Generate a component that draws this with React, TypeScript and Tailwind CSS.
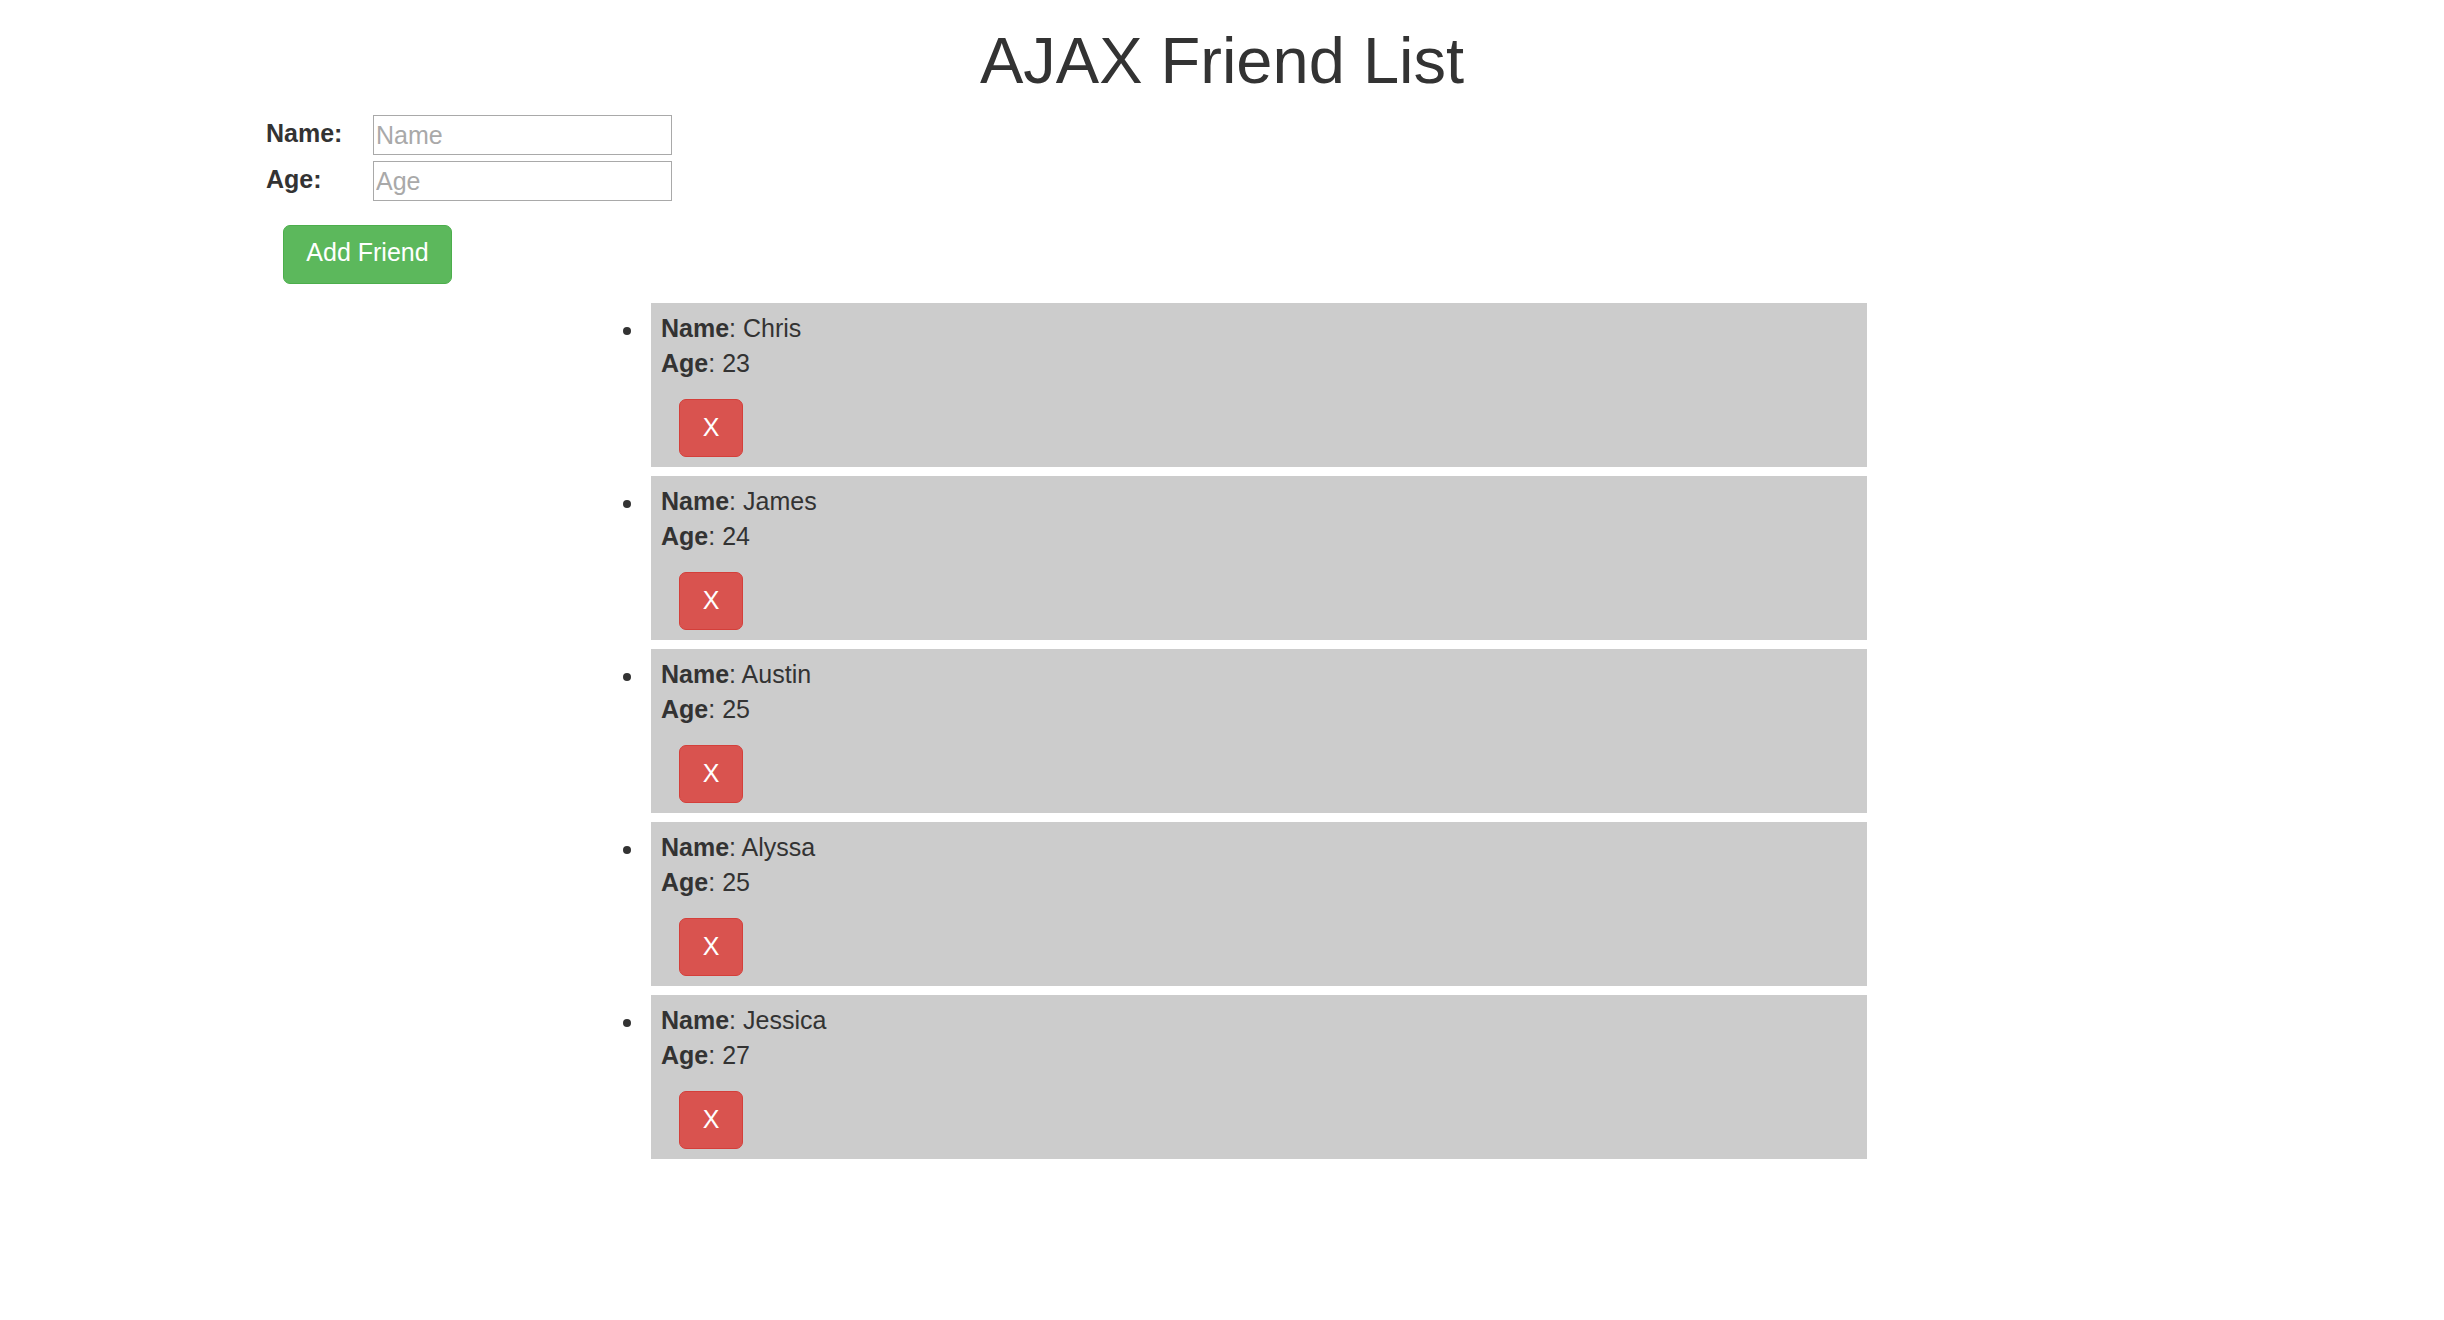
const friends = [
  { name: 'Chris', age: 23 },
  { name: 'James', age: 24 },
  { name: 'Austin', age: 25 },
  { name: 'Alyssa', age: 25 },
  { name: 'Jessica', age: 27 },
];

export default function App() {
  return (
    <div className="min-h-screen bg-white font-['Liberation_Sans',Arial,sans-serif] text-[#333]">
      <h1 className="mt-[25px] text-center text-[65px] leading-[72px] font-normal">AJAX Friend List</h1>

      <form className="mt-[18px] ml-[266px]" onSubmit={(e) => e.preventDefault()}>
        <div className="flex items-start">
          <label className="w-[107px] text-[25px] leading-[36px] font-bold">Name:</label>
          <input
            placeholder="Name"
            className="h-[40px] w-[299px] border border-[#a9a9a9] px-[2px] text-[25px] placeholder:text-[#a9a9a9]"
          />
        </div>
        <div className="mt-[6px] flex items-start">
          <label className="w-[107px] text-[25px] leading-[36px] font-bold">Age:</label>
          <input
            placeholder="Age"
            className="h-[40px] w-[299px] border border-[#a9a9a9] px-[2px] text-[25px] placeholder:text-[#a9a9a9]"
          />
        </div>
        <button
          type="submit"
          className="mt-[24px] ml-[17px] h-[59px] w-[169px] rounded-[7px] border border-[#4cae4c] bg-[#5cb85c] pb-[3px] text-[25px] text-white"
        >
          Add Friend
        </button>
      </form>

      <ul className="mt-[19px] ml-[611px] w-[1256px]">
        {friends.map((f) => (
          <li key={f.name} className="mb-[9px] flex items-start">
            <div className="w-[40px] shrink-0 pt-[24px] pl-[12px]">
              <div className="h-[8px] w-[8px] rounded-full bg-[#333]" />
            </div>
            <div className="flex-1 bg-[#ccc] pt-[8px] pb-[10px] pl-[10px] text-[25px] leading-[35px]">
              <div>
                <b>Name</b>: {f.name}
              </div>
              <div>
                <b>Age</b>: {f.age}
              </div>
              <button className="mt-[18px] ml-[18px] h-[58px] w-[64px] rounded-[7px] border border-[#d43f3a] bg-[#d9534f] pb-[2px] text-[25px] leading-[35px] text-white">
                X
              </button>
            </div>
          </li>
        ))}
      </ul>
    </div>
  );
}
